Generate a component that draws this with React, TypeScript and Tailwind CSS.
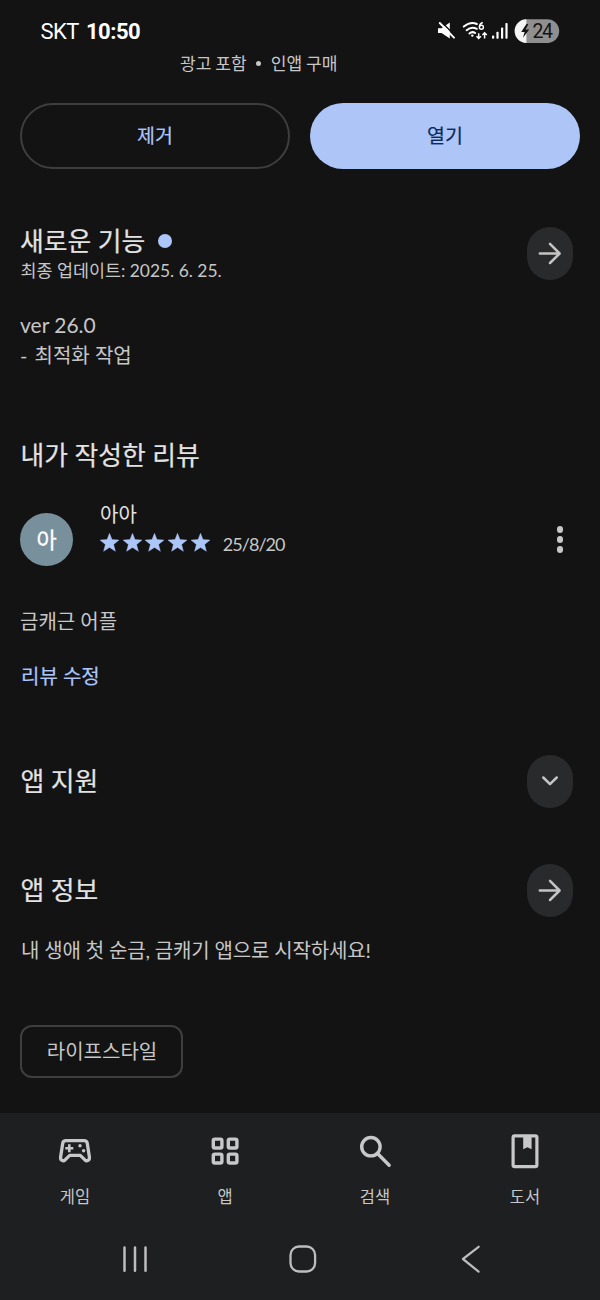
import type { ReactNode } from "react";

function StatusIcons() {
  return (
    <svg width="124" height="26" viewBox="436 18 124 26" fill="none">
      <path d="M438 28.200h3.600l8.200-5.800v16.200l-8.200-5.600H438z" fill="#fff" />
      <path d="M441.200 21.400 456 36.700" stroke="#131314" strokeWidth="1.400" />
      <path d="M439.800 23 454 37.600" stroke="#fff" strokeWidth="2" strokeLinecap="round" />
      <g stroke="#fff" strokeWidth="2" strokeLinecap="round">
        <path d="M463.800 26.600c4.600-3.800 9.400-4.200 13-2.600" />
        <path d="M466.600 30.200c3.200-2.600 6.800-3 10.200-1.400" />
        <path d="M469.400 33.400c1.800-1.500 4-1.600 5.800-.4" />
      </g>
      <circle cx="472.300" cy="35.600" r="1.200" fill="#fff" />
      <path d="M482.300 22.800c-1.800.7-2.800 2.200-2.800 4" stroke="#fff" strokeWidth="1.500" strokeLinecap="round" />
      <circle cx="481.400" cy="27.200" r="2" stroke="#fff" strokeWidth="1.400" />
      <path d="M478.700 33.200v5.200m-2.200-2.200 2.200 2.200 2.200-2.200M484.600 38.400v-5.600m-2.200 2.200 2.200-2.200 2.200 2.200" stroke="#fff" strokeWidth="1.500" />
      <g fill="#fff">
        <rect x="492" y="35.400" width="2.200" height="3.400" rx=".8" />
        <rect x="496.400" y="31.800" width="2.200" height="7" rx=".8" />
        <rect x="501" y="27.400" width="2.200" height="11.400" rx=".8" />
        <rect x="505.400" y="23" width="2.200" height="15.800" rx=".8" />
      </g>
      <rect x="515.600" y="19.300" width="43.600" height="23.600" rx="11.800" fill="#8f8f90" />
      <path d="M526.400 19.300v23.600a11.800 11.800 0 0 1 0-23.600z" fill="#f4f4f4" />
      <path d="M526.600 23.800 521.200 32h3.400l-1.600 5.800 6.200-8.400h-3.400l2.400-5.200z" fill="#131314" />
      <text x="532.400" y="38" fontSize="19.500" fontWeight="400" fontFamily="Roboto, sans-serif" fill="#131314" textLength="20.600">24</text>
    </svg>
  );
}

function RoundButton({ children, label }: { children: ReactNode; label: string }) {
  return (
    <button aria-label={label} className="flex h-[53px] w-[46px] shrink-0 items-center justify-center rounded-[23px] bg-[#282a2c]">
      {children}
    </button>
  );
}

function Arrow() {
  return (
    <svg width="24" height="24" viewBox="0 0 24 24" fill="none" stroke="#c4c4c4" strokeWidth="2.500" strokeLinecap="round" strokeLinejoin="round">
      <path d="M1.800 11.500h19.600M12 1.800l9.600 9.700-9.600 9.500" />
    </svg>
  );
}

function Star() {
  return (
    <svg width="20" height="20" viewBox="0 0 20 20">
      <path fill="#adc6fa" stroke="#adc6fa" strokeWidth=".4" d="m9.500.3 2.500 6.300 7 .5-5.400 4.300 1.800 6.900-5.900-3.800-5.900 3.800 1.800-6.900L0 7.100l7-.5z" />
    </svg>
  );
}

const tabs: { label: string; icon: ReactNode }[] = [
  {
    label: "게임",
    icon: (
      <>
        <path
          d="M9 7.700h18c1.900 0 3 1 3.300 2.800l2.100 13.600c.4 3.200-2.500 4.600-4.500 2.800l-4.600-4.600H12.700l-4.600 4.600c-2 1.800-4.900.4-4.500-2.800l2.100-13.600C6 8.700 7.100 7.700 9 7.700z"
          fill="none" stroke="#c8c8cb" strokeWidth="3.300" strokeLinejoin="round"
        />
        <path d="M12.300 11.200v8M8.300 15.200h8" stroke="#c8c8cb" strokeWidth="2.600" />
        <circle cx="23" cy="12.700" r="1.700" fill="#c8c8cb" />
        <circle cx="26.600" cy="17.700" r="1.700" fill="#c8c8cb" />
      </>
    ),
  },
  {
    label: "앱",
    icon: (
      <g fill="none" stroke="#c8c8cb" strokeWidth="3.400">
        <rect x="6.300" y="6.100" width="8.600" height="8.900" rx="1.600" />
        <rect x="21.300" y="6.100" width="8.600" height="8.900" rx="1.600" />
        <rect x="6.300" y="21.100" width="8.600" height="8.900" rx="1.600" />
        <rect x="21.300" y="21.100" width="8.600" height="8.900" rx="1.600" />
      </g>
    ),
  },
  {
    label: "검색",
    icon: (
      <g fill="none" stroke="#c8c8cb" strokeWidth="3.400" strokeLinecap="round">
        <circle cx="13.900" cy="13.700" r="9.200" />
        <path d="m21 21 11.200 11.200" />
      </g>
    ),
  },
  {
    label: "도서",
    icon: (
      <>
        <rect x="6.100" y="2.800" width="23.800" height="30.900" rx="1.600" fill="none" stroke="#c8c8cb" strokeWidth="3.200" />
        <path d="M16.200 3v13.200l4.200-2 4.200 2V3z" fill="#c8c8cb" />
      </>
    ),
  },
];

const heading = "text-[25.800px] text-[#e3e3e3] [-webkit-text-stroke:0.200px_#e3e3e3]";

export default function App() {
  return (
    <div className="flex h-[1300px] w-[600px] flex-col overflow-hidden bg-[#131314] font-['Lato','Noto_Sans_CJK_KR',sans-serif] text-[#c7c7c7]">
      <header className="flex h-[52px] items-center justify-between pt-[10px] pr-[40px] pl-[40.500px] font-['Roboto','Noto_Sans_CJK_KR',sans-serif] text-[22px] text-white">
        <div className="flex items-center gap-[7px]">
          <span className="tracking-[-0.500px]">SKT</span>
          <span className="font-bold tracking-[-0.500px]">10:50</span>
        </div>
        <StatusIcons />
      </header>

      <div className="-mt-px flex h-6 items-center gap-[9.500px] pl-[180px] font-['Noto_Sans_CJK_KR',sans-serif] text-[17.100px]">
        <span>광고 포함</span>
        <span className="mt-px size-[5px] rounded-full bg-[#c7c7c7]" />
        <span>인앱 구매</span>
      </div>

      <div className="mt-[28px] grid h-[66px] grid-cols-2 gap-5 px-5 text-[19.500px]">
        <button className="rounded-full border-2 border-[#3e3e3f] text-[#adc6fa] [-webkit-text-stroke:0.200px_#adc6fa]">제거</button>
        <button className="rounded-full bg-[#adc6f7] text-[#0b2a5e] [-webkit-text-stroke:0.200px_#0b2a5e]">열기</button>
      </div>

      <section className="mt-[58px] pr-[27px] pl-5">
        <div className="flex h-[53px] items-center justify-between">
          <div className="pt-[3px]">
            <h2 className={`flex h-[30px] items-center gap-[13px] ${heading}`}>
              새로운 기능
              <span className="size-[14px] rounded-full bg-[#adc6fa]" />
            </h2>
            <p className="h-7 pt-px pl-[0.500px] text-[17.400px] leading-7">최종 업데이트: 2025. 6. 25.</p>
          </div>
          <RoundButton label="새로운 기능"><Arrow /></RoundButton>
        </div>
        <p className="mt-[30px] text-[20px] leading-[30px]">
          <span className="text-[21px]">ver 26.0</span>
          <br /><span className="mr-[2px]">-</span> 최적화 작업
        </p>
      </section>

      <section className="mt-[67px] px-5">
        <h2 className={`h-[36px] pl-[0.500px] leading-[36px] ${heading}`}>내가 작성한 리뷰</h2>
        <div className="mt-[28px] flex h-[76px] items-center">
          <div className="flex size-[53px] items-center justify-center rounded-full bg-[#78909c] text-[22px] text-white [-webkit-text-stroke:0.300px_#fff]">아</div>
          <div className="-mt-[22px] ml-[27px] flex flex-col">
            <span className="h-7 text-[20px] leading-7 text-[#e3e3e3]">아아</span>
            <div className="mt-px flex h-7 items-center">
              <div className="flex gap-[2.700px]">
                {[0, 1, 2, 3, 4].map((n) => <Star key={n} />)}
              </div>
              <span className="mt-[4px] ml-3 text-[18px] tracking-[-0.950px]">25/8/20</span>
            </div>
          </div>
          <button aria-label="더보기" className="mt-px mr-[17px] ml-auto flex flex-col gap-[3.500px]">
            <span className="size-[6.500px] rounded-full bg-[#c7c7c7]" />
            <span className="size-[6.500px] rounded-full bg-[#c7c7c7]" />
            <span className="size-[6.500px] rounded-full bg-[#c7c7c7]" />
          </button>
        </div>
        <p className="mt-[29px] h-[30px] text-[20px] leading-[30px]">금캐근 어플</p>
        <a className="mt-[25px] ml-px block h-[30px] text-[20px] leading-[30px] text-[#adc6fa] [-webkit-text-stroke:0.200px_#adc6fa]">리뷰 수정</a>
      </section>

      <section className="mt-[64px] flex h-[53px] items-center justify-between pr-[27px] pl-5">
        <h2 className={`${heading} ml-[0.500px]`}>앱 지원</h2>
        <RoundButton label="앱 지원">
          <svg width="18" height="12" viewBox="0 0 18 12" fill="none" stroke="#c4c4c4" strokeWidth="2.500" strokeLinecap="round" strokeLinejoin="round">
            <path d="m2.300 1.500 6.700 6.700 6.700-6.700" />
          </svg>
        </RoundButton>
      </section>

      <section className="mt-[56px] pr-[27px] pl-5">
        <div className="flex h-[53px] items-center justify-between">
          <h2 className={`${heading} ml-[0.500px]`}>앱 정보</h2>
          <RoundButton label="앱 정보"><Arrow /></RoundButton>
        </div>
        <p className="mt-[18px] ml-px h-[30px] text-[20px] leading-[30px] tracking-[-0.150px] whitespace-nowrap">내 생애 첫 순금, 금캐기 앱으로 시작하세요!</p>
        <button className="mt-[60px] flex h-[53px] w-[163px] items-center justify-center rounded-[12px] border-2 border-[#3e3e3f] pb-px pl-px text-[20px]">라이프스타일</button>
      </section>

      <footer className="mt-auto h-[187px] bg-[#1e1f21]">
        <nav className="grid grid-cols-4 pt-[20px]">
          {tabs.map((tab) => (
            <button key={tab.label} className="flex flex-col items-center">
              <svg width="36" height="36" viewBox="0 0 36 36">{tab.icon}</svg>
              <span className="mt-[16px] h-6 text-[16.500px] leading-6">{tab.label}</span>
            </button>
          ))}
        </nav>
        <div className="mt-[34px] flex h-[32px] items-center pl-[120px]">
          <svg width="30" height="30" viewBox="0 0 30 30" stroke="#bdbdbf" strokeWidth="2.500" strokeLinecap="round">
            <path d="M4.500 3.500v23.300M15 3.500v23.300M25.500 3.500v23.300" />
          </svg>
          <svg className="ml-[138px]" width="30" height="30" viewBox="0 0 30 30" fill="none" stroke="#bdbdbf" strokeWidth="2.300">
            <rect x="2.500" y="2.500" width="24.600" height="25" rx="8.500" />
          </svg>
          <svg className="ml-[139px]" width="30" height="30" viewBox="0 0 30 30" fill="none" stroke="#bdbdbf" strokeWidth="2.300" strokeLinecap="round" strokeLinejoin="round">
            <path d="M21.500 2.800 5 15l16.500 12.600" transform="translate(1.200 0) scale(.95 1)" />
          </svg>
        </div>
      </footer>
    </div>
  );
}
